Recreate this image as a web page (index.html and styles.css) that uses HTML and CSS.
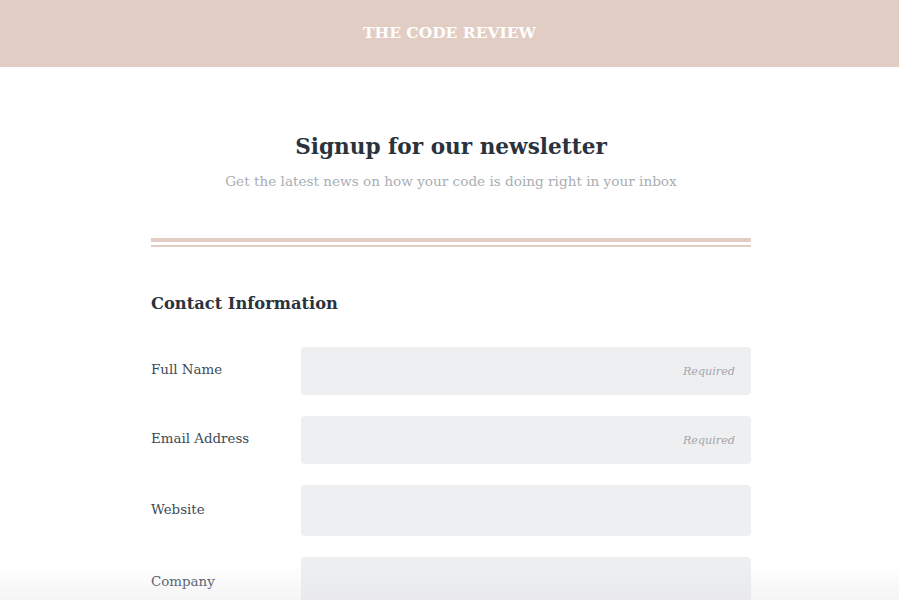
FILE: index.html
```html
<!DOCTYPE html>
<html lang="en">
<head>
<meta charset="utf-8">
<title>The Code Review</title>
<link rel="stylesheet" href="styles.css">
</head>
<body>
<header class="topbar">
  <div class="brand">THE CODE REVIEW</div>
</header>
<main class="container">
  <section class="intro">
    <h1 class="title">Signup for our newsletter</h1>
    <p class="subtitle">Get the latest news on how your code is doing right in your inbox</p>
  </section>
  <div class="rule"></div>
  <form class="form">
    <h2 class="section-title">Contact Information</h2>
    <div class="row">
      <label class="label" for="name">Full Name</label>
      <div class="field"><input id="name" class="input" type="text"><span class="hint">Required</span></div>
    </div>
    <div class="row">
      <label class="label" for="email">Email Address</label>
      <div class="field"><input id="email" class="input" type="email"><span class="hint">Required</span></div>
    </div>
    <div class="row">
      <label class="label" for="site">Website</label>
      <div class="field"><input id="site" class="input tall" type="text"></div>
    </div>
    <div class="row">
      <label class="label" for="company">Company</label>
      <div class="field"><input id="company" class="input tall" type="text"></div>
    </div>
  </form>
</main>
<div class="fade"></div>
</body>
</html>
```
FILE: styles.css
```css
* { box-sizing: border-box; }
html, body { margin: 0; padding: 0; background: #ffffff; }
body {
  font-family: "DejaVu Serif", "Liberation Serif", serif;
  color: #34404c;
}
.topbar {
  height: 67px;
  background: #e2cdc4;
  display: flex;
  align-items: center;
  justify-content: center;
}
.brand {
  color: #ffffff;
  font-weight: bold;
  font-size: 15.5px;
  margin-top: -3px;
}
.container {
  width: 600px;
  margin-left: calc(50% - 298.5px);
}
.intro {
  text-align: center;
  padding-top: 64px;
}
.title {
  margin: 0;
  font-size: 21.6px;
  line-height: 32px;
  font-weight: bold;
  color: #2a333d;
}
.subtitle {
  margin: 7px 0 0;
  font-size: 13.6px;
  line-height: 22px;
  color: #a9aeb4;
}
.rule {
  margin-top: 46px;
  height: 9px;
  border-top: 4px solid #e2cdc4;
  border-bottom: 2px solid #e2cdc4;
}
.form { padding-top: 44px; }
.section-title {
  margin: 0 0 30px;
  font-size: 16.3px;
  line-height: 26px;
  font-weight: bold;
  color: #2a333d;
}
.row {
  display: flex;
  align-items: center;
  margin-bottom: 21px;
}
.label {
  width: 150px;
  flex: none;
  font-size: 13.4px;
  color: #3d4a57;
  padding-bottom: 3px;
}
.field {
  flex: 1;
  position: relative;
}
.input {
  display: block;
  width: 100%;
  height: 48px;
  border: none;
  border-radius: 4px;
  background: #eeeff1;
  outline: none;
}
.input.tall { height: 51px; }
.hint {
  position: absolute;
  right: 16px;
  top: 50%;
  transform: translateY(-50%);
  font-style: italic;
  font-size: 11.2px;
  color: #a3a6aa;
}
.fade {
  position: fixed;
  left: 0;
  right: 0;
  bottom: 0;
  height: 36px;
  background: linear-gradient(to bottom, rgba(240,240,240,0), rgba(225,225,225,0.35));
  pointer-events: none;
}
```
